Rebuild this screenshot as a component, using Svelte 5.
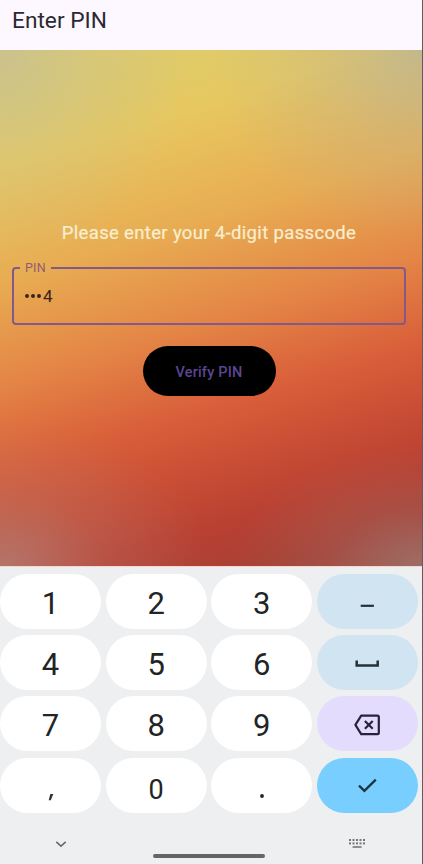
<script>
  const keys = [
    '1', '2', '3', 'dash',
    '4', '5', '6', 'space',
    '7', '8', '9', 'delete',
    ',', '0', '.', 'enter'
  ];
  const dotColumns = [0, 1, 2, 3, 4];
</script>

<div class="screen">
  <header><h1>Enter PIN</h1></header>

  <main>
    <p class="prompt">Please enter your 4-digit passcode</p>
    <fieldset>
      <legend>PIN</legend>
      <div class="value"><i></i><i></i><i></i><span>4</span></div>
    </fieldset>
    <button class="verify">Verify PIN</button>
  </main>

  <section class="keyboard">
    <div class="grid">
      {#each keys as key}
        {#if key === 'dash'}
          <button class="key soft" aria-label="dash">
            <svg width="40" height="30" viewBox="0 0 40 30"><path d="M13.7 18.8H26.9" stroke="#253036" stroke-width="2.2" /></svg>
          </button>
        {:else if key === 'space'}
          <button class="key soft" aria-label="space">
            <svg width="40" height="30" viewBox="0 0 40 30"><path d="M9.7 12.5V17.4H30.7V12.5" fill="none" stroke="#253036" stroke-width="2.5" /></svg>
          </button>
        {:else if key === 'delete'}
          <button class="key lilac" aria-label="delete">
            <svg width="40" height="30" viewBox="0 0 40 30" fill="none" stroke="#28223a" stroke-width="2.2" stroke-linejoin="round">
              <path d="M14.2 6.6H30.4Q31.8 6.6 31.8 8V23.8Q31.8 25.2 30.4 25.2H14.2L8.4 15.9Z" />
              <path d="M17.9 12L25.7 19.8M25.7 12L17.9 19.8" />
            </svg>
          </button>
        {:else if key === 'enter'}
          <button class="key blue" aria-label="enter">
            <svg width="40" height="30" viewBox="0 0 40 30"><path d="M12 15.7L17.4 20.8L28.8 9.6" fill="none" stroke="#1b3444" stroke-width="2.3" /></svg>
          </button>
        {:else}
          <button class="key" class:zero={key === '0'} class:point={key === '.'} class:comma={key === ','}>
            {#if key === ','}
              <svg width="10" height="10" viewBox="0 0 10 10" aria-label="comma"><path d="M4.3 1H7.3L4.8 7.3H2.7Z" fill="#333" /></svg>
            {:else if key === '.'}
              <svg width="6" height="6" viewBox="0 0 6 6" aria-label="period"><circle cx="3" cy="3" r="1.9" fill="#222" /></svg>
            {:else}
              <span>{key}</span>
            {/if}
          </button>
        {/if}
      {/each}
    </div>

    <footer>
      <svg class="chevron" width="12" height="8" viewBox="0 0 12 8"><path d="M1.3 1.8L6 6.1L10.7 1.8" fill="none" stroke="#686b6d" stroke-width="1.6" /></svg>
      <div class="home"></div>
      <svg class="board" width="18" height="11" viewBox="0 0 18 11" fill="#75787a">
        {#each dotColumns as c}
          <rect x={1 + c * 3.5} y="1" width="2" height="2" />
          <rect x={1 + c * 3.5} y="4.4" width="2" height="2" />
        {/each}
        <rect x="4.6" y="8.2" width="9" height="1.6" />
      </svg>
    </footer>
  </section>
</div>

<style>
  .screen {
    box-sizing: border-box;
    width: 423px;
    height: 864px;
    display: flex;
    flex-direction: column;
    overflow: hidden;
    font-family: Roboto, "Liberation Sans", sans-serif;
    border-right: 1px solid #66595d;
    background: #edeff1;
  }
  header {
    height: 50px;
    flex: none;
    background: #fdf8ff;
    padding-left: 12px;
  }
  h1 {
    margin: 0;
    padding-top: 7px;
    font-size: 22.7px;
    line-height: 27px;
    font-weight: 400;
    color: #2c2930;
  }
  main {
    height: 516px;
    flex: none;
    box-sizing: border-box;
    display: flex;
    flex-direction: column;
    align-items: center;
    padding: 171px 16px 0 12px;
    background:
      radial-gradient(ellipse 190px 210px at 0 0, rgba(190, 188, 160, .6), rgba(190, 188, 160, .25) 50%, rgba(190, 188, 160, 0)),
      radial-gradient(ellipse 210px 190px at 100% 0, rgba(184, 180, 155, .75), rgba(184, 180, 155, .3) 50%, rgba(184, 180, 155, 0)),
      radial-gradient(ellipse 210px 145px at 0 100%, rgba(176, 128, 120, .8), rgba(176, 128, 120, .28) 50%, rgba(176, 128, 120, 0)),
      radial-gradient(ellipse 190px 120px at 100% 100%, rgba(158, 122, 115, .75), rgba(158, 122, 115, .25) 50%, rgba(158, 122, 115, 0)),
      linear-gradient(163deg, #dfcb70 0, #e0cb68 10%, #e7c860 18%, #e8ac52 36%, #e48546 52%, #d9603a 65%, #cb4f35 74%, #b94132 84%, #a83f34 93%, #a0453b 100%);
  }
  .prompt {
    margin: 0;
    font-size: 18.5px;
    line-height: 24px;
    letter-spacing: .34px;
    white-space: nowrap;
    color: #f8eed0;
    -webkit-text-stroke: .2px #f8eed0;
  }
  fieldset {
    box-sizing: border-box;
    width: 100%;
    height: 64px;
    min-width: 0;
    margin: 16px 0 0;
    padding: 0 10px;
    border: 2px solid #81598a;
    border-radius: 4px;
  }
  legend {
    margin-left: -4px;
    padding: 0 5px 0 5px;
    font-size: 12.5px;
    line-height: 14px;
    letter-spacing: .2px;
    color: #915b73;
  }
  .value {
    display: flex;
    align-items: center;
    gap: 2px;
    height: 20px;
    margin-top: 11px;
    padding-left: 1px;
    color: #38251c;
    font-size: 17px;
  }
  .value i {
    width: 4px;
    height: 4px;
    border-radius: 50%;
    background: #38251c;
  }
  .value span { line-height: 20px; }
  button { border: 0; padding: 0; margin: 0; font-family: inherit; }
  .verify {
    width: 133px;
    height: 50px;
    flex: none;
    margin-top: 21px;
    padding-top: 2px;
    border-radius: 25px;
    background: #000;
    color: #5c4593;
    font-size: 14.5px;
    font-weight: 500;
    letter-spacing: .2px;
  }
  .keyboard { flex: 1; background: #edeff1; border-top: 1px solid #f4d6d2; }
  .grid {
    display: grid;
    grid-template-columns: repeat(4, 101px);
    grid-auto-rows: 55px;
    gap: 6.2px 4.6px;
    padding-top: 7px;
  }
  .key {
    display: flex;
    align-items: center;
    justify-content: center;
    border-radius: 27.5px;
    background: #fff;
    color: #222426;
    font-size: 31px;
    line-height: 36px;
  }
  .key span { margin-top: 4px; }
  .zero span { font-size: 27px; margin-top: 9px; }
  .comma svg { margin-top: 25px; }
  .point svg { margin-top: 22px; }
  .soft { background: #d0e5f1; }
  .lilac { background: #e4dcfd; }
  .blue { background: #78cfff; }
  footer {
    display: flex;
    height: 51px;
    align-items: flex-start;
    box-sizing: border-box;
    padding: 25px 56px 0 55px;
  }
  .chevron { margin-top: 2px; }
  .home {
    width: 112px;
    height: 4px;
    margin: 16px 0 0 86px;
    border-radius: 2px;
    background: #636566;
  }
  .board { margin-left: auto; }
</style>
